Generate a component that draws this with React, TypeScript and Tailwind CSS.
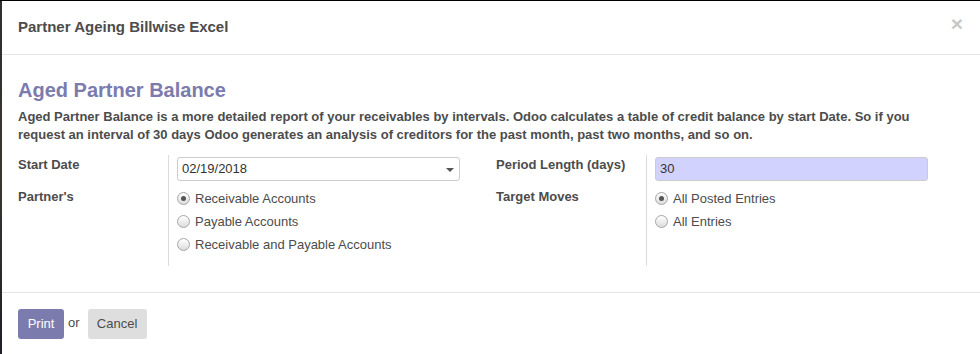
import React from "react";

function Radio({ checked, label }: { checked?: boolean; label: string }) {
  return (
    <div className="flex h-[23px] items-center">
      <span className="relative flex h-[13px] w-[13px] items-center justify-center rounded-full border border-[#a6a6a6] bg-gradient-to-b from-[#ffffff] to-[#dcdcdc]">
        {checked && <span className="h-[5px] w-[5px] rounded-full bg-[#555555]" />}
      </span>
      <span className="ml-[5px] whitespace-nowrap text-[13px] leading-[18px] text-[#4c4c4c]">{label}</span>
    </div>
  );
}

function Label({ children, className = "" }: { children: React.ReactNode; className?: string }) {
  return (
    <div className={"whitespace-nowrap text-[13px] font-bold leading-[18px] text-[#4c4c4c] " + className}>{children}</div>
  );
}

export default function App() {
  return (
    <div
      className="h-[354px] w-[980px] overflow-hidden bg-[#000000] pt-[1px]"
      style={{ fontFamily: '"Liberation Sans", Arial, Helvetica, sans-serif' }}
    >
      <div className="flex h-full">
        <div className="h-full w-[2px] bg-gradient-to-b from-[#2e2e2e] via-[#3a3530] to-[#1f1f28]" />
        <div className="flex h-full flex-1 flex-col bg-white">
          {/* Header */}
          <div className="relative flex h-[54px] shrink-0 items-center border-b border-[#e5e5e5] pl-[16px]">
            <div className="pb-[1px] text-[15px] font-bold text-[#4c4c4c]">Partner Ageing Billwise Excel</div>
            <div className="absolute right-[17px] top-[9px] text-[21px] font-bold leading-[28px] text-[#c8c8c8]">×</div>
          </div>

          {/* Body */}
          <div className="h-[238px] shrink-0 border-b border-[#e5e5e5] pl-[16px] pr-[18px] pt-[24px]">
            <h2 className="text-[20px] font-bold leading-[23px] text-[#7c7bad]">Aged Partner Balance</h2>
            <div className="mt-[6px] text-[13px] font-bold leading-[18px] text-[#4c4c4c]">
              <div className="whitespace-nowrap">
                Aged Partner Balance is a more detailed report of your receivables by intervals. Odoo calculates a table of credit balance by start Date. So if you
              </div>
              <div className="whitespace-nowrap">
                request an interval of 30 days Odoo generates an analysis of creditors for the past month, past two months, and so on.
              </div>
            </div>

            <div className="mt-[11px] flex">
              {/* Left group */}
              <div className="grid w-[478px] shrink-0 grid-cols-[150px_328px] grid-rows-[32px_auto]">
                <Label className="pt-[1px]">Start Date</Label>
                <div className="border-l border-[#dcdcdc] pl-[8px] pt-[2px]">
                  <div className="relative flex h-[24px] w-[283px] items-center rounded-[3px] border border-[#cccccc] bg-white pl-[4px] text-[13px] text-[#333333]">
                    02/19/2018
                    <span className="absolute right-[5px] top-[10px] h-0 w-0 border-l-[4px] border-r-[4px] border-t-[4px] border-l-transparent border-r-transparent border-t-[#555555]" />
                  </div>
                </div>
                <Label className="pt-[1px]">Partner's</Label>
                <div className="border-l border-[#dcdcdc] pb-[10px] pl-[8px]">
                  <Radio checked label="Receivable Accounts" />
                  <Radio label="Payable Accounts" />
                  <Radio label="Receivable and Payable Accounts" />
                </div>
              </div>

              {/* Right group */}
              <div className="grid w-[450px] shrink-0 grid-cols-[150px_300px] grid-rows-[32px_auto]">
                <Label className="pt-[1px]">Period Length (days)</Label>
                <div className="border-l border-[#dcdcdc] pl-[8px] pt-[2px]">
                  <div className="flex h-[24px] w-[273px] items-center rounded-[3px] border border-[#cccccc] bg-[#d2d2ff] pl-[4px] text-[13px] text-[#333333]">
                    30
                  </div>
                </div>
                <Label className="pt-[1px]">Target Moves</Label>
                <div className="border-l border-[#dcdcdc] pb-[10px] pl-[8px]">
                  <Radio checked label="All Posted Entries" />
                  <Radio label="All Entries" />
                </div>
              </div>
            </div>
          </div>

          {/* Footer */}
          <div className="flex items-start pl-[16px] pt-[16px]">
            <button className="h-[30px] w-[46px] rounded-[3px] bg-[#7c7bad] text-[13px] text-white">Print</button>
            <span className="ml-[4px] mt-[4px] text-[13px] text-[#4c4c4c]">or</span>
            <button className="ml-[8px] h-[30px] w-[59px] rounded-[3px] bg-[#dedede] text-[13px] text-[#4c4c4c]">Cancel</button>
          </div>
        </div>
      </div>
    </div>
  );
}
